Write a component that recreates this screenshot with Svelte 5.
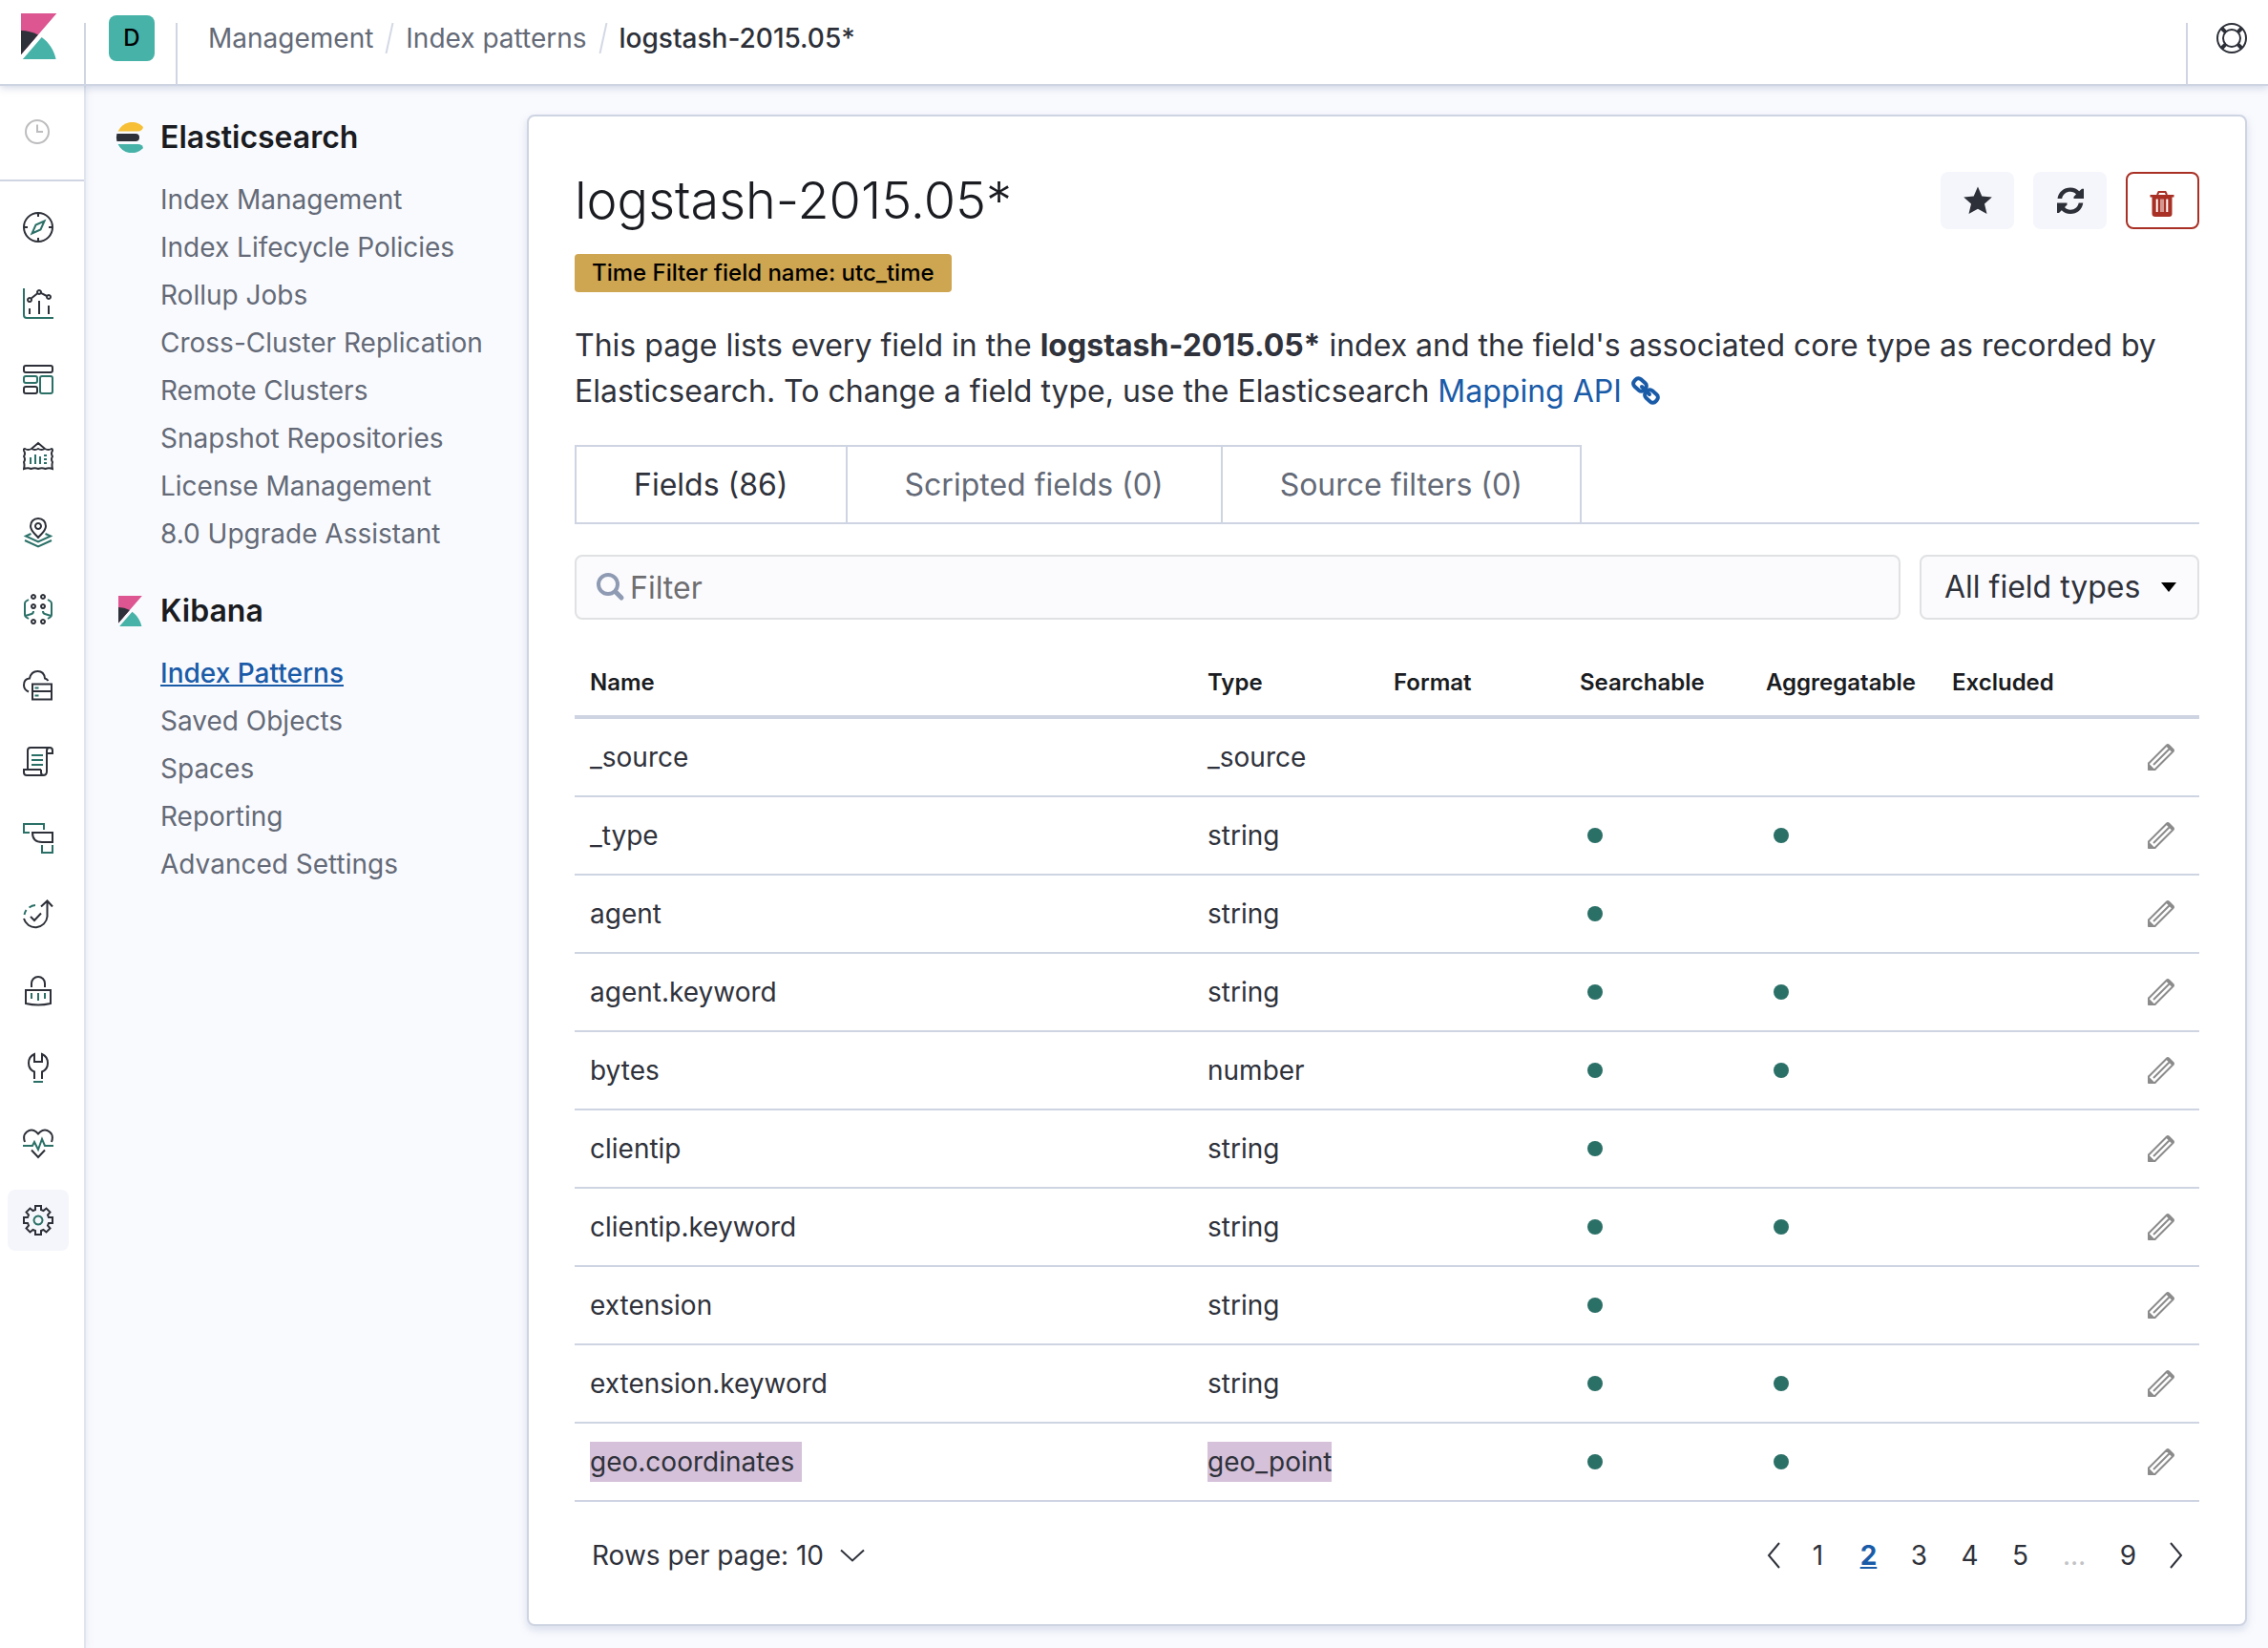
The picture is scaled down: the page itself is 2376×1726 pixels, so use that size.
<script>
  const crumbs = ['Management', 'Index patterns'];

  const elasticLinks = [
    'Index Management',
    'Index Lifecycle Policies',
    'Rollup Jobs',
    'Cross-Cluster Replication',
    'Remote Clusters',
    'Snapshot Repositories',
    'License Management',
    '8.0 Upgrade Assistant'
  ];
  const kibanaLinks = ['Index Patterns', 'Saved Objects', 'Spaces', 'Reporting', 'Advanced Settings'];

  // Each app icon has dark strokes (d) and accent strokes (a) on a 32 unit grid.
  const apps = [
    { name: 'Discover', d: 'M16 1a15 15 0 1 0 0 30a15 15 0 1 0 0-30zM16 1v4M16 27v4M1 16h4M27 16h4', a: 'M22.500 9.500L18.500 18.500L9.500 22.500L13.500 13.500z' },
    { name: 'Visualize', d: 'M7 21v6M17 13v14M27 18v9M8.700 10.500L15.300 5.300M18.900 4.900L25 8M7 9.900a2 2 0 1 0 .01 0zM17 2a2 2 0 1 0 .01 0zM27 7a2 2 0 1 0 .01 0z', a: 'M1 0v28a3 3 0 0 0 3 3h28' },
    { name: 'Dashboard', d: 'M3 1h26a2 2 0 0 1 2 2v3a2 2 0 0 1-2 2h-26a2 2 0 0 1-2-2v-3a2 2 0 0 1 2-2zM3 23h10a2 2 0 0 1 2 2v3a2 2 0 0 1-2 2h-10a2 2 0 0 1-2-2v-3a2 2 0 0 1 2-2z', a: 'M3 12h10a2 2 0 0 1 2 2v3a2 2 0 0 1-2 2h-10a2 2 0 0 1-2-2v-3a2 2 0 0 1 2-2zM20 12h9a2 2 0 0 1 2 2v14a2 2 0 0 1-2 2h-9a2 2 0 0 1-2-2v-14a2 2 0 0 1 2-2z' },
    { name: 'Canvas', d: 'M9 8L16 2L23 8M2 8q3.500 2 7 0q3.500 2 7 0q3.500 2 7 0q3.500 2 7 0q1 0 1 2q-2 3 0 6q-2 3 0 6q-1 3 0 7q-4-1.500-7.500 0q-3.500-1.500-7.500 0q-3.500-1.500-7.500 0q-3-1.500-7.500 0q1-4 0-7q2-3 0-6q2-3 0-6q-.5-2 1-2z', a: 'M8 17v7M13 14v10M18 16v8M22 15h3M22 19h3M22 23h3' },
    { name: 'Maps', d: 'M16 1c-4.800 0-8 3.500-8 8c0 5 4.500 8 8 12c3.500-4 8-7 8-12c0-4.500-3.200-8-8-8zM16 6a3 3 0 1 0 .01 0z', a: 'M8.500 17L3 19.500L16 25.500L29 19.500L23.500 17M2 24L16 30.500L30 24' },
    { name: 'Machine Learning', d: 'M11 1a2 2 0 1 0 .01 0zM21 1a2 2 0 1 0 .01 0zM11 11a2 2 0 1 0 .01 0zM21 11a2 2 0 1 0 .01 0zM11 27a2 2 0 1 0 .01 0zM21 27a2 2 0 1 0 .01 0z', a: 'M6 6L3.500 7.500Q2 8.500 2 10V22Q2 23.500 3.500 24.500L6 26M2.500 23L9 21Q11 20.500 11 18M26 6L28.500 7.500Q30 8.500 30 10V22Q30 23.500 28.500 24.500L26 26M29.500 23L23 21Q21 20.500 21 18' },
    { name: 'Infrastructure', d: 'M6 22.500Q1 20.500 1 15.500Q1 9 7 8.500C8 4 11 1 15.500 1C20 1 22.500 4 23 8.500Q25 8.800 26.500 11M10 14.500h20v16h-20zM10 22h20', a: 'M12.500 18.500h4M12.500 26.500h4' },
    { name: 'Logs', d: 'M19 24V24H1V27Q1 30 4 30H21Q25 30 25 26V4Q25 1 28 1H8Q5 1 5 4V24M28 1Q31 1 31 4V7H25M19 24V27Q19 30 22 30', a: 'M9 9h12M9 14h12M9 19h12' },
    { name: 'APM', d: 'M10 10H31V20H20Q10 20 10 10z', a: 'M7 10H1V1H22V7M20 23V31H31V23' },
    { name: 'Uptime', d: 'M1 20A12.500 12.500 0 0 0 25.500 18V2M19 7.500L25.500 1.500L31 7.500M8 18L12 22L19 14.500', a: 'M1.500 16Q2.200 13 3.500 11M6.500 8.500Q9.500 6.300 13 6' },
    { name: 'SIEM', d: 'M9 12V8a7 7 0 0 1 14 0V12M3 15H29V29Q16 32 3 29z', a: 'M9 18v6M16 18v8M23 18v6' },
    { name: 'Dev Tools', d: 'M12 28V20.500Q6 18 6 11.500Q6 4.500 12 2V10H20V2Q26 4.500 26 11.500Q26 18 20 20.500V28', a: 'M11 31h10' },
    { name: 'Monitoring', d: 'M2 14Q-.5 7 4 3.500Q9-.5 14 3.500L16 5.500L18 3.500Q23-.5 28 3.500Q32.500 7 30 14M9 22.500L16 30L23 22.500', a: 'M0 18H10L12 14L16 22L20 11L23 18H32' },
    { name: 'Management', d: 'M13 1H19V5L21.500 6L24.500 3.500L28.500 7.500L26 10.500L27 13H31V19H27L26 21.500L28.500 24.500L24.500 28.500L21.500 26L19 27V31H13V27L10.500 26L7.500 28.500L3.500 24.500L6 21.500L5 19H1V13H5L6 10.500L3.500 7.500L7.500 3.500L10.500 6L13 5z', a: 'M16 11.500a4.500 4.500 0 1 0 .01 0z', active: true }
  ];

  const tabs = ['Fields (86)', 'Scripted fields (0)', 'Source filters (0)'];
  const fields = [
    { name: '_source', type: '_source' },
    { name: '_type', type: 'string', search: true, agg: true },
    { name: 'agent', type: 'string', search: true },
    { name: 'agent.keyword', type: 'string', search: true, agg: true },
    { name: 'bytes', type: 'number', search: true, agg: true },
    { name: 'clientip', type: 'string', search: true },
    { name: 'clientip.keyword', type: 'string', search: true, agg: true },
    { name: 'extension', type: 'string', search: true },
    { name: 'extension.keyword', type: 'string', search: true, agg: true },
    { name: 'geo.coordinates', type: 'geo_point', search: true, agg: true, marked: true }
  ];

  let filter = $state('');
  let activeTab = $state(0);
</script>

{#snippet kibanaMark()}
  <path fill="#dd5591" d="M4 0v28.789L28.935.017z" />
  <path fill="#2f313a" d="M4 12v16.789l11.906-13.738A24.721 24.721 0 0 0 4 12" />
  <path class="cut" d="M29.300 0L3.500 29.800V32H5.200L30.500 2z" />
  <path fill="#46b2a8" d="M18.479 16.664L6.268 30.754l-1.073 1.237h23.191c-1.252-6.292-4.883-11.719-9.908-15.327" />
{/snippet}

<div class="app">
  <header class="topbar">
    <a class="home" href="#home" aria-label="Kibana home">
      <svg class="home-mark" viewBox="0 0 32 32" aria-hidden="true">{@render kibanaMark()}</svg>
    </a>
    <div class="space">
      <button class="avatar" aria-label="Default space">D</button>
    </div>
    <nav class="crumbs" aria-label="Breadcrumb">
      {#each crumbs as crumb}
        <a href="#crumb">{crumb}</a>
        <svg class="slash" viewBox="0 0 12 32" aria-hidden="true"><path d="M9.500 0L2.500 32" /></svg>
      {/each}
      <span class="here">logstash-2015.05*</span>
    </nav>
    <div class="help">
      <button aria-label="Help">
        <svg class="icon32" viewBox="0 0 32 32" aria-hidden="true">
          <g fill="none" stroke="#2d3038" stroke-width="2"><circle cx="16" cy="16" r="15" /><circle cx="16" cy="16" r="9" /></g>
          <path stroke="#2d3038" stroke-width="4" d="M5.500 5.500L9.800 9.800M26.500 5.500L22.200 9.800M5.500 26.500L9.800 22.200M26.500 26.500L22.200 22.200" />
        </svg>
      </button>
    </div>
  </header>

  <div class="body">
    <nav class="rail" aria-label="Apps">
      <div class="recent">
        <button aria-label="Recently viewed">
          <svg class="clock" viewBox="0 0 28 28" aria-hidden="true"><circle cx="14" cy="14" r="12" /><path d="M14 6.500V14H20" /></svg>
        </button>
      </div>
      <ul>
        {#each apps as app}
          <li>
            <a href="#app" class:active={app.active} aria-label={app.name}>
              <svg class="icon32 app-icon" viewBox="0 0 32 32" aria-hidden="true">
                <path class="dark" d={app.d} /><path class="accent" d={app.a} />
              </svg>
            </a>
          </li>
        {/each}
      </ul>
    </nav>

    <nav class="side" aria-label="Management">
      <section>
        <h2>
          <svg class="icon32" viewBox="0 0 32 32" aria-hidden="true">
            <path fill="#f6bf36" d="M3.600 9.500A16 16 0 0 1 29.500 4.500Q30.500 6 28.500 8Q27 9.500 24.500 9.500z" />
            <path fill="#2d3038" d="M2.400 12H22a4 4 0 0 1 0 8H2.400A16 16 0 0 1 2.400 12z" />
            <path fill="#46b2a8" d="M3.600 22.900H24.500Q27 22.900 28.500 24.200Q30.500 26 29.500 27.500A16 16 0 0 1 3.600 22.900z" />
          </svg>
          Elasticsearch
        </h2>
        <ul>
          {#each elasticLinks as link}<li><a href="#link">{link}</a></li>{/each}
        </ul>
      </section>
      <section>
        <h2>
          <svg class="icon32" viewBox="0 0 32 32" aria-hidden="true">{@render kibanaMark()}</svg>
          Kibana
        </h2>
        <ul>
          {#each kibanaLinks as link, i}<li><a href="#link" class:current={i === 0}>{link}</a></li>{/each}
        </ul>
      </section>
    </nav>

    <main class="panel">
      <div class="title-row">
        <h1>logstash-2015.05*</h1>
        <div class="actions">
          <button aria-label="Set as default index">
            <svg class="icon32" viewBox="0 0 32 32" aria-hidden="true"><path fill="#2d3038" d="M16 1.500L20.300 11.500L30.800 12.600L23 19.600L25.500 30L16 24.800L6.500 30L9 19.600L1.200 12.600L11.700 11.500z" /></svg>
          </button>
          <button aria-label="Refresh field list">
            <svg class="icon32" viewBox="0 0 32 32" aria-hidden="true">
              <path fill="#2d3038" d="M2.500 14C3.500 7 9 2.500 16 2.500C20 2.500 23 4 25.200 6.200L28 3.700H30V14H19.500V12L22 9.500C20.500 7.700 18.500 6.800 16 6.800C11.500 6.800 8 9.500 7.200 14zM29.300 18.500C28.300 25.500 23 30 16 30C12 30 9 28.500 6.800 26.300L4 29H2V18.500H12.500V20.500L10 23C11.500 24.800 13.500 25.700 16 25.700C20.500 25.700 23.800 23 24.700 18.500z" />
            </svg>
          </button>
          <button class="danger" aria-label="Delete index pattern">
            <svg class="icon32 trash" viewBox="1 -2 32 32" aria-hidden="true">
              <path fill="none" stroke="#a93025" stroke-width="2" d="M11 8L12.500 5H19.500L21 8" />
              <path fill="#a93025" fill-rule="evenodd" d="M3.500 8H28.500V10.500H26.500V28Q26.500 31 23.500 31H9Q5.500 31 5.500 28V10.500H3.500zM9.700 12.500V26H11.700V12.500zM14.500 12.500V26H17.500V12.500zM20.300 12.500V26H22.300V12.500z" />
              <path stroke="#a93025" d="M16 12V26.500" />
            </svg>
          </button>
        </div>
      </div>

      <span class="badge">Time Filter field name: utc_time</span>

      <p>
        This page lists every field in the <strong>logstash-2015.05*</strong> index and the field's associated core type as recorded by Elasticsearch. To change a field type, use the Elasticsearch
        <a href="#mapping">Mapping API
          <svg class="icon32 chain" viewBox="0 0 32 32" aria-hidden="true">
            <g fill="none" stroke="#1a5ba8" stroke-width="4">
              <rect x="3" y="5" width="14" height="10" rx="4" transform="rotate(42 10 10)" />
              <rect x="15" y="17" width="14" height="10" rx="4" transform="rotate(42 22 22)" />
              <path stroke-linecap="round" d="M12 12L20 20" />
            </g>
          </svg></a>
      </p>

      <div class="tabs" role="tablist">
        {#each tabs as tab, i}
          <button role="tab" aria-selected={activeTab === i} onclick={() => (activeTab = i)}>{tab}</button>
        {/each}
      </div>

      <div class="filters">
        <label class="search">
          <svg class="icon32" viewBox="0 0 32 32" aria-hidden="true"><g fill="none" stroke="#8e9bb3" stroke-width="4"><circle cx="13" cy="13" r="10" /><path stroke-width="5" stroke-linecap="round" d="M21 21L27 27" /></g></svg>
          <input type="text" placeholder="Filter" aria-label="Filter" bind:value={filter} />
        </label>
        <div class="select">
          <select aria-label="Field type"><option>All field types</option></select>
          <svg class="caret" viewBox="0 0 16 10" aria-hidden="true"><path d="M0 0H16L8 10z" /></svg>
        </div>
      </div>

      <table>
        <colgroup>
          <col /><col class="data" /><col class="data" /><col class="data" /><col class="data" /><col class="data" /><col class="edit" />
        </colgroup>
        <thead>
          <tr>
            <th>Name</th><th>Type</th><th>Format</th><th>Searchable</th><th>Aggregatable</th><th>Excluded</th>
            <td></td>
          </tr>
        </thead>
        <tbody>
          {#each fields as field}
            <tr>
              <td><span class:marked={field.marked} class:trail={field.marked}>{field.name}</span></td>
              <td><span class:marked={field.marked}>{field.type}</span></td>
              <td></td>
              <td>{#if field.search}<span class="dot" role="img" aria-label="Yes"></span>{/if}</td>
              <td>{#if field.agg}<span class="dot" role="img" aria-label="Yes"></span>{/if}</td>
              <td></td>
              <td>
                <button class="pencil" aria-label="Edit {field.name}">
                  <svg class="icon32" viewBox="0 0 32 32" aria-hidden="true">
                    <path fill="none" stroke="#8b8b8b" stroke-width="2" stroke-linejoin="round" d="M3 22.500L22 3.500Q23 2.500 24 3.500L28.500 8Q29.500 9 28.500 10L9.500 29H3zM8 24L25 7M22 4L28 10" />
                    <path fill="#8b8b8b" d="M2 21.500L10.500 30H4Q2 30 2 28z" />
                  </svg>
                </button>
              </td>
            </tr>
          {/each}
        </tbody>
      </table>

      <div class="footer">
        <button class="rows">
          Rows per page: 10
          <svg class="icon32" viewBox="0 0 32 32" aria-hidden="true"><path class="chev" d="M4 10.500L16 21.500L28 10.500" /></svg>
        </button>
        <nav class="pages" aria-label="Pagination">
          <button class="arrow prev" aria-label="Previous page"><svg class="icon32" viewBox="0 0 32 32" aria-hidden="true"><path class="chev" d="M22 3L11 16L22 29" /></svg></button>
          <button>1</button>
          <button class="on" aria-current="page">2</button>
          <button>3</button>
          <button>4</button>
          <button>5</button>
          <span class="gap">…</span>
          <button>9</button>
          <button class="arrow next" aria-label="Next page"><svg class="icon32" viewBox="0 0 32 32" aria-hidden="true"><path class="chev" d="M10 3L21 16L10 29" /></svg></button>
        </nav>
      </div>
    </main>
  </div>
</div>

<style>
  :global(body) {
    margin: 0;
    background: #f9fafe;
  }
  .app {
    min-height: 100vh;
    display: flex;
    flex-direction: column;
    font-family: Inter, "Liberation Sans", sans-serif;
    font-size: 28px;
    line-height: 42px;
    color: #2f323b;
  }
  .app * {
    box-sizing: border-box;
  }
  ul {
    list-style: none;
    margin: 0;
    padding: 0;
  }
  a {
    color: inherit;
    text-decoration: none;
  }
  button, input, select {
    font: inherit;
    color: inherit;
    background: none;
    border: 0;
    padding: 0;
    margin: 0;
  }
  button {
    cursor: pointer;
  }
  svg {
    display: block;
    flex: none;
  }
  .icon32 {
    width: 32px;
    height: 32px;
  }
  .cut {
    fill: #f9fafe;
  }

  .topbar {
    display: flex;
    height: 90px;
    background: #fff;
    border-bottom: 2px solid #ced4e2;
    box-shadow: 0 2px 8px rgba(140, 155, 190, 0.4);
    position: relative;
    z-index: 1;
  }
  .home {
    width: 88px;
    padding: 14px 16px;
  }
  .home-mark {
    width: 48px;
    height: 48px;
  }
  .home-mark .cut {
    fill: #fff;
  }
  .space, .help {
    display: flex;
    align-items: flex-start;
  }
  .space {
    padding: 16px 24px 0 26px;
    background: linear-gradient(#d0d5e3, #d0d5e3) left bottom / 2px 64px no-repeat,
      linear-gradient(#d0d5e3, #d0d5e3) right bottom / 2px 64px no-repeat;
  }
  .avatar {
    width: 48px;
    height: 48px;
    border-radius: 8px;
    background: #46b2a8;
    color: #000;
    font-size: 24px;
    font-weight: 500;
    line-height: 48px;
  }
  .crumbs {
    flex: 1;
    display: flex;
    align-items: center;
    height: 80px;
    padding-left: 32px;
    color: #646a77;
  }
  .slash {
    width: 12px;
    height: 32px;
    margin: 0 11px;
    fill: none;
    stroke: #d3d8e4;
    stroke-width: 2;
  }
  .here {
    font-weight: 500;
    color: #2d3038;
  }
  .help {
    padding: 24px 22px 0 32px;
    background: linear-gradient(#d0d5e3, #d0d5e3) left bottom / 2px 64px no-repeat;
  }

  .body {
    flex: 1;
    display: flex;
    align-items: stretch;
  }
  .rail {
    width: 90px;
    flex: none;
    background: #fff;
    border-right: 2px solid #e0e4ec;
    box-shadow: 2px 0 6px rgba(140, 155, 190, 0.12);
  }
  .recent {
    display: flex;
    align-items: flex-start;
    height: 100px;
    padding: 34px 25px;
    border-bottom: 2px solid #d0d5e3;
  }
  .clock {
    width: 28px;
    height: 28px;
    fill: none;
    stroke: #bdbdbf;
    stroke-width: 2;
  }
  .rail ul {
    display: flex;
    flex-direction: column;
    gap: 16px;
    padding: 16px 8px;
  }
  .rail li a {
    display: block;
    width: 64px;
    height: 64px;
    padding: 16px;
    border-radius: 8px;
  }
  .rail li a.active {
    background: #f5f6fb;
  }
  .app-icon path {
    fill: none;
    stroke-width: 2;
  }
  .dark {
    stroke: #2d3038;
  }
  .accent {
    stroke: #2b7067;
  }

  .side {
    width: 462px;
    flex: none;
    padding: 30px 16px 0 30px;
    color: #646a77;
  }
  .side section {
    margin-bottom: 28px;
  }
  h2 {
    display: flex;
    align-items: center;
    gap: 16px;
    margin: 0 0 20px;
    font-size: 32px;
    line-height: 48px;
    font-weight: 600;
    color: #1a1c21;
  }
  .side ul {
    padding-left: 48px;
  }
  .side li {
    height: 50px;
    line-height: 42px;
  }
  .side .current {
    color: #1a5ba8;
    font-weight: 500;
    text-decoration: underline;
  }

  .panel {
    flex: 1;
    min-width: 0;
    margin: 30px 22px 24px 0;
    padding: 48px;
    background: #fff;
    border: 2px solid #ced4e2;
    border-radius: 8px;
    box-shadow: 0 4px 8px rgba(140, 155, 190, 0.3);
  }
  .title-row {
    display: flex;
    justify-content: space-between;
    align-items: center;
    height: 80px;
  }
  h1 {
    margin: 0;
    font-size: 54px;
    line-height: 80px;
    font-weight: 300;
    color: #1a1c21;
  }
  .actions {
    display: flex;
    gap: 20px;
  }
  .actions button {
    width: 77px;
    height: 60px;
    display: flex;
    align-items: center;
    justify-content: center;
    border-radius: 8px;
    background: #f5f6fb;
  }
  .actions .danger {
    background: #fff;
    border: 2px solid #a93025;
  }
  .trash {
    overflow: visible;
  }
  .badge {
    display: block;
    width: fit-content;
    margin-top: 16px;
    padding: 0 18px;
    border-radius: 4px;
    background: #cea550;
    color: #000;
    font-size: 24px;
    font-weight: 500;
    line-height: 40px;
  }
  p {
    margin: 32px 0;
    font-size: 32px;
    line-height: 48px;
  }
  p a {
    color: #1a5ba8;
  }
  strong {
    font-weight: 700;
  }
  .chain {
    display: inline-block;
    vertical-align: -4px;
  }
  .tabs {
    display: flex;
    border-bottom: 2px solid #ced4e2;
    margin-bottom: 32px;
  }
  .tabs button {
    height: 81px;
    padding: 0 60px;
    border: 2px solid #ced4e2;
    border-width: 2px 2px 0 0;
    font-size: 32px;
    color: #646a77;
  }
  .tabs button:first-child {
    border-left-width: 2px;
  }
  .tabs button[aria-selected='true'] {
    color: #2f323b;
  }

  .filters {
    display: flex;
    gap: 20px;
    font-size: 32px;
  }
  .search, .select {
    display: flex;
    align-items: center;
    height: 68px;
    border: 2px solid #e0e1e3;
    border-radius: 8px;
    background: #fbfbfe;
  }
  .search {
    flex: 1;
    padding-left: 20px;
    gap: 4px;
  }
  .search input {
    flex: 1;
    height: 100%;
    outline: 0;
  }
  .search input::placeholder {
    color: #6e6e70;
    opacity: 1;
  }
  .select {
    position: relative;
  }
  .select select {
    appearance: none;
    width: 289px;
    height: 100%;
    padding: 0 60px 0 24px;
  }
  .caret {
    position: absolute;
    right: 22px;
    width: 16px;
    height: 10px;
    pointer-events: none;
  }

  table {
    width: 100%;
    table-layout: fixed;
    border-collapse: separate;
    border-spacing: 0;
    margin-top: 24px;
  }
  .data {
    width: 195px;
  }
  .edit {
    width: 80px;
  }
  th, td {
    padding: 0 16px;
    text-align: left;
    white-space: nowrap;
  }
  thead th, thead td {
    height: 80px;
    padding-top: 8px;
    border-bottom: 4px solid #ced4e2;
    font-size: 24px;
    font-weight: 600;
    color: #1a1c21;
  }
  tbody td {
    height: 82px;
    border-bottom: 2px solid #ced4e2;
  }
  .marked {
    display: inline-block;
    background: #d5c1d9;
  }
  .trail {
    padding-right: 8px;
  }
  .dot {
    display: block;
    width: 16px;
    height: 16px;
    margin-left: 8px;
    border-radius: 50%;
    background: #2b7067;
  }
  .pencil {
    display: block;
    margin-left: 8px;
  }

  .footer {
    display: flex;
    justify-content: space-between;
    align-items: center;
    height: 112px;
    padding-left: 18px;
    margin-bottom: -32px;
  }
  .rows {
    display: flex;
    align-items: center;
    gap: 14px;
  }
  .chev {
    fill: none;
    stroke: #2f323b;
    stroke-width: 2;
  }
  .pages {
    display: flex;
    align-items: center;
  }
  .pages button {
    display: flex;
    justify-content: center;
    width: 53px;
  }
  .pages .prev {
    width: 40px;
  }
  .pages .next {
    width: 48px;
  }
  .pages .on {
    color: #1a5ba8;
    font-weight: 700;
    text-decoration: underline;
  }
  .gap {
    width: 60px;
    text-align: center;
    color: #c2c3c6;
  }
</style>
